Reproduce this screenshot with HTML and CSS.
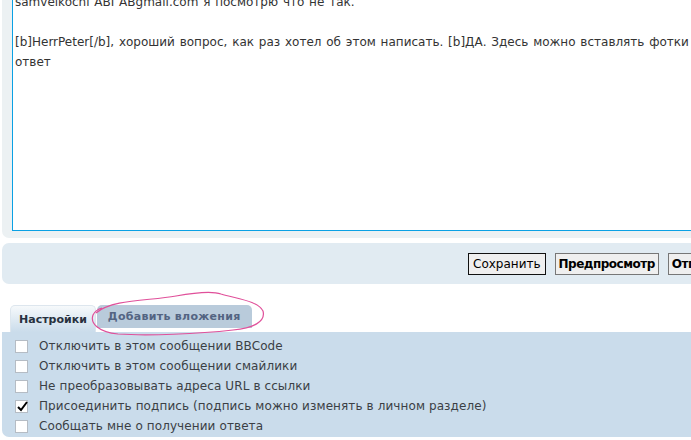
FILE: index.html
```html
<!DOCTYPE html>
<html lang="ru">
<head>
    <meta charset="UTF-8">
    <title>Ответ</title>
    <link rel="stylesheet" href="styles.css">
</head>
<body>
<div class="form">
    <div class="editor-panel">
        <div class="editor">
            <div class="editor-text">
                samvelkochi ABI ABgmail.com я посмотрю что не так.<br>
                <br>
                [b]HerrPeter[/b], хороший вопрос, как раз хотел об этом написать. [b]ДА. Здесь можно вставлять фотки и прочее<br>
                ответ
            </div>
        </div>
    </div>

    <div class="submit-panel">
        <button class="btn">Сохранить</button>
        <button class="btn btn-main">Предпросмотр</button>
        <button class="btn btn-main">Отправить</button>
    </div>

    <div class="tabs">
        <div class="tab active">Настройки</div>
        <div class="tab">Добавить вложения</div>
        <svg class="scribble" width="190" height="50" viewBox="0 0 190 50">
            <path d="M8 22 C 25 8, 60 10, 88 5 C 110 1, 125 0, 133 3 C 150 8, 170 10, 175 20 C 178 31, 165 37, 145 39 C 110 43, 60 45, 30 43 C 10 41, 2 32, 5 24 C 7 20, 10 18, 14 17" fill="none" stroke="#e0509a" stroke-width="1.2"/>
        </svg>
    </div>

    <div class="options-panel">
        <label class="option"><span class="box"></span>Отключить в этом сообщении BBCode</label>
        <label class="option"><span class="box"></span>Отключить в этом сообщении смайлики</label>
        <label class="option"><span class="box"></span>Не преобразовывать адреса URL в ссылки</label>
        <label class="option"><span class="box"><svg width="13" height="13" viewBox="0 0 13 13"><path d="M2 7 L5 10 L11 2" fill="none" stroke="#000" stroke-width="2"/></svg></span>Присоединить подпись (подпись можно изменять в личном разделе)</label>
        <label class="option"><span class="box"></span>Сообщать мне о получении ответа</label>
    </div>
</div>
</body>
</html>
```

FILE: styles.css
```css
body {
    margin: 0;
    background: #fff;
    font-family: 'DejaVu Sans', Verdana, sans-serif;
    overflow: hidden;
}

.form {
    width: 780px;
    margin-left: 2px;
}

.editor-panel {
    background: #ecf1f3;
    border-radius: 0 0 0 7px;
    padding: 0 0 7px 10px;
}

.editor {
    height: 230px;
    background: #fff;
    border: 1px solid #0ba1e4;
    border-top: none;
    overflow: hidden;
    padding-left: 2px;
}

.editor-text {
    margin-top: -8px;
    font-size: 12px;
    line-height: 20px;
    word-spacing: 1px;
    color: #333;
    white-space: nowrap;
}

.submit-panel {
    margin-top: 5px;
    background: #e1ebf2;
    border-radius: 7px 0 0 7px;
    padding: 10px 0 9px 466px;
    display: flex;
    gap: 9px;
}

.btn {
    height: 22px;
    padding: 0 4px;
    font-family: 'DejaVu Sans', Verdana, sans-serif;
    font-size: 12px;
    color: #000;
    background: #efefef;
    border: 1px solid #111;
    border-radius: 0;
}

.btn-main {
    padding: 0 3px;
    font-weight: bold;
    letter-spacing: -0.5px;
    border-color: #777;
}

.tabs {
    position: relative;
    margin-top: 21px;
    padding-left: 8px;
    display: flex;
    align-items: flex-end;
    gap: 1px;
}

.tab {
    height: 23px;
    margin-bottom: 4px;
    padding: 0 11px;
    display: flex;
    align-items: center;
    font-size: 11px;
    font-weight: bold;
    letter-spacing: 0.3px;
    color: #536482;
    background: #b9cbdb;
    border-radius: 5px 5px 0 0;
}

.tab.active {
    height: 27px;
    margin-bottom: 0;
    padding: 0 8px;
    letter-spacing: 0;
    color: #28313f;
    background: linear-gradient(#f6f9fb, #cadceb);
    border: 1px solid #dde6ee;
    border-bottom: none;
    box-sizing: border-box;
}

.scribble {
    position: absolute;
    left: 86px;
    top: -14px;
}

.options-panel {
    background: #cadceb;
    border-radius: 0 0 0 7px;
    padding: 4px 0 1px 13px;
}

.option {
    height: 20px;
    display: flex;
    align-items: center;
    font-size: 12px;
    letter-spacing: 0.1px;
    color: #3b3f45;
    white-space: nowrap;
}

.box {
    width: 11px;
    height: 11px;
    margin-right: 11px;
    background: #fff;
    border: 1px solid #b5bcc4;
    position: relative;
}

.box svg {
    position: absolute;
    left: 0;
    top: -1px;
}
```
